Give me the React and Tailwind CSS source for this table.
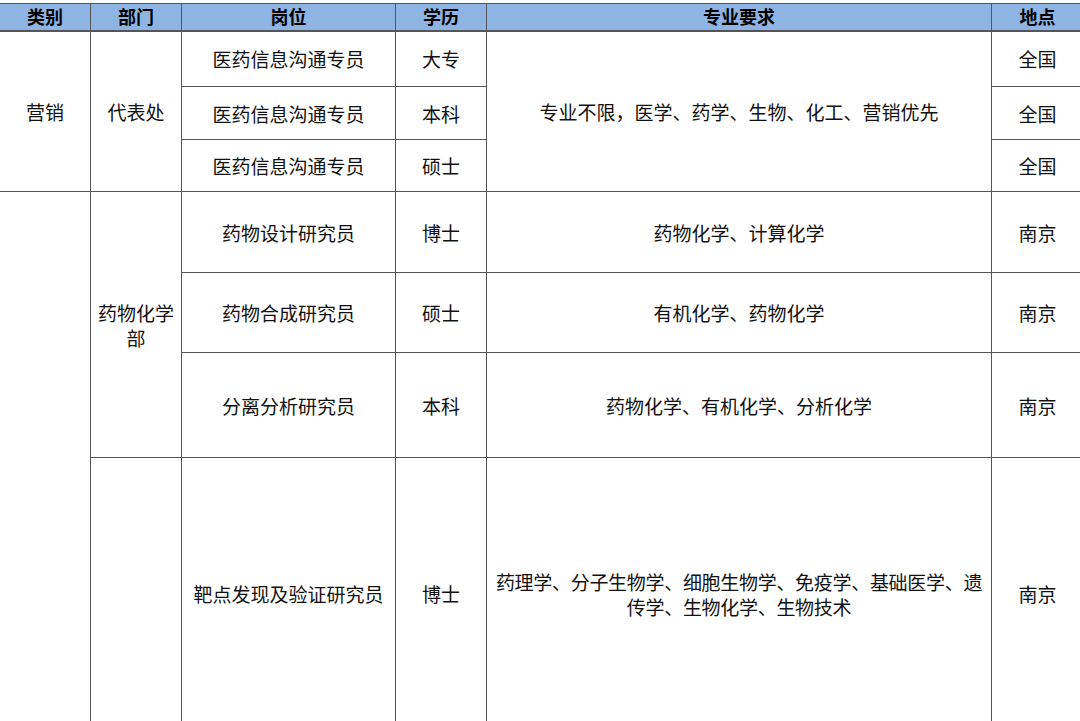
const font = { fontFamily: '"Noto Sans CJK SC", "Noto Sans", sans-serif' };

const cell = "border border-[#555] text-center align-middle px-1 leading-[25px]";

const rnd = [
  { dept: "药物化学部", rows: [
    { pos: "药物设计研究员", edu: "博士", req: "药物化学、计算化学", loc: "南京", h: "h-[81px]" },
    { pos: "药物合成研究员", edu: "硕士", req: "有机化学、药物化学", loc: "南京", h: "h-[80px]" },
    { pos: "分离分析研究员", edu: "本科", req: "药物化学、有机化学、分析化学", loc: "南京", h: "h-[105px]" },
  ] },
];

export default function App() {
  return (
    <div className="w-[1080px] h-[721px] overflow-hidden bg-white pt-[3px]" style={font}>
      <table className="border-collapse table-fixed w-[1084px] -ml-[1px] text-[19px] text-[#111]">
        <colgroup>
          <col className="w-[91px]" />
          <col className="w-[91px]" />
          <col className="w-[214px]" />
          <col className="w-[91px]" />
          <col className="w-[505px]" />
          <col className="w-[92px]" />
        </colgroup>
        <thead>
          <tr className="bg-[#8db4e2] font-bold text-black text-[18px]">
            {["类别", "部门", "岗位", "学历", "专业要求", "地点"].map((t) => (
              <th key={t} className={`${cell} h-[27px] border-b-2 leading-[22px]`}>{t}</th>
            ))}
          </tr>
        </thead>
        <tbody>
          <tr>
            <td rowSpan={3} className={cell}>营销</td>
            <td rowSpan={3} className={cell}>代表处</td>
            <td className={`${cell} h-[56px]`}>医药信息沟通专员</td>
            <td className={cell}>大专</td>
            <td rowSpan={3} className={cell}>专业不限，医学、药学、生物、化工、营销优先</td>
            <td className={cell}>全国</td>
          </tr>
          <tr>
            <td className={`${cell} h-[53px]`}>医药信息沟通专员</td>
            <td className={cell}>本科</td>
            <td className={cell}>全国</td>
          </tr>
          <tr>
            <td className={`${cell} h-[52px]`}>医药信息沟通专员</td>
            <td className={cell}>硕士</td>
            <td className={cell}>全国</td>
          </tr>
          {rnd[0].rows.map((r, i) => (
            <tr key={r.pos}>
              {i === 0 && <td rowSpan={4} className={cell}></td>}
              {i === 0 && <td rowSpan={3} className={cell}>{rnd[0].dept}</td>}
              <td className={`${cell} ${r.h}`}>{r.pos}</td>
              <td className={cell}>{r.edu}</td>
              <td className={cell}>{r.req}</td>
              <td className={cell}>{r.loc}</td>
            </tr>
          ))}
          <tr>
            <td className={cell}></td>
            <td className={`${cell} h-[272px]`}>靶点发现及验证研究员</td>
            <td className={cell}>博士</td>
            <td className={`${cell} px-0 tracking-[-0.3px] whitespace-nowrap`}>
              药理学、分子生物学、细胞生物学、免疫学、基础医学、遗<br />传学、生物化学、生物技术
            </td>
            <td className={cell}>南京</td>
          </tr>
        </tbody>
      </table>
    </div>
  );
}
